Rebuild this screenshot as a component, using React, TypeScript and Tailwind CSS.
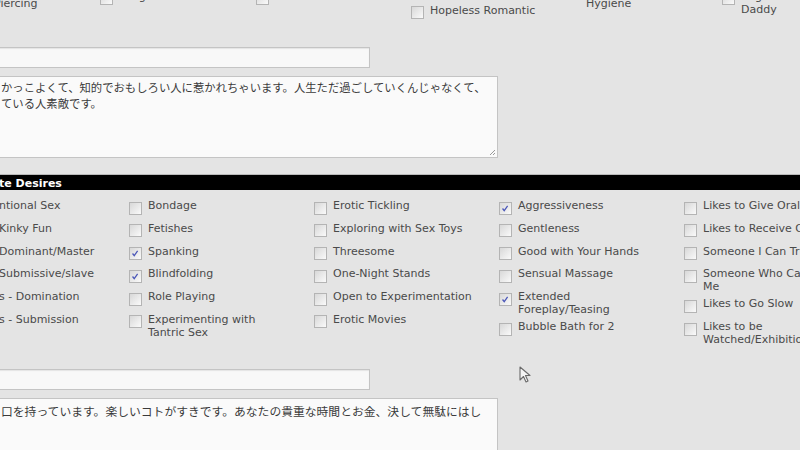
import React from 'react'

type Item = { label: string[]; checked?: boolean }

const col1 = ['ntional Sex', 'Kinky Fun', 'Dominant/Master', 'Submissive/slave', 's - Domination', 's - Submission']

const cols: Item[][] = [
  [
    { label: ['Bondage'] },
    { label: ['Fetishes'] },
    { label: ['Spanking'], checked: true },
    { label: ['Blindfolding'], checked: true },
    { label: ['Role Playing'] },
    { label: ['Experimenting with', 'Tantric Sex'] },
  ],
  [
    { label: ['Erotic Tickling'] },
    { label: ['Exploring with Sex Toys'] },
    { label: ['Threesome'] },
    { label: ['One-Night Stands'] },
    { label: ['Open to Experimentation'] },
    { label: ['Erotic Movies'] },
  ],
  [
    { label: ['Aggressiveness'], checked: true },
    { label: ['Gentleness'] },
    { label: ['Good with Your Hands'] },
    { label: ['Sensual Massage'] },
    { label: ['Extended', 'Foreplay/Teasing'], checked: true },
    { label: ['Bubble Bath for 2'] },
  ],
  [
    { label: ['Likes to Give Oral'] },
    { label: ['Likes to Receive Oral'] },
    { label: ['Someone I Can Trust'] },
    { label: ['Someone Who Can Teach', 'Me'] },
    { label: ['Likes to Go Slow'] },
    { label: ['Likes to be', 'Watched/Exhibitionist'] },
  ],
]

function Box({ checked }: { checked?: boolean }) {
  return (
    <span className="relative block w-[13px] h-[13px] shrink-0 mt-[2.5px] border border-[#b4b4b4] bg-linear-to-br from-[#d8d8d8] to-[#fafafa]">
      {checked && (
        <svg viewBox="0 0 13 13" className="absolute inset-0 w-[11px] h-[11px]">
          <path d="M3 6.5 L5 9 L9 3.5" fill="none" stroke="#4a56b8" strokeWidth="1.5" />
        </svg>
      )}
    </span>
  )
}

function Check({ item }: { item: Item }) {
  return (
    <div className="flex items-start min-h-[22.75px] pt-[3px] pb-[1px] leading-[13px]">
      <Box checked={item.checked} />
      <span className="ml-[6px] whitespace-nowrap">
        {item.label.map((l, i) => (
          <div key={i}>{l}</div>
        ))}
      </span>
    </div>
  )
}

function TextBox({ w }: { w: string }) {
  return <div className={`h-[21px] -ml-[3px] border border-[#c4c4c4] bg-[#f8f8f8] shadow-[inset_0_1px_1px_rgba(0,0,0,0.08)] ${w}`} />
}

export default function App() {
  const jp = { fontFamily: '"Noto Sans CJK JP", "DejaVu Sans", sans-serif' }

  return (
    <div
      className="relative w-[800px] h-[450px] overflow-hidden bg-[#e4e4e4] text-[11px] text-[#4a4a4a]"
      style={{ fontFamily: '"DejaVu Sans", Verdana, sans-serif' }}
    >
      {/* top checkbox row, cut at the top */}
      <div className="flex -mt-[20px] h-[67px] leading-[13px]">
        <div className="w-[100px] shrink-0 pt-[16.5px]">
          <div className="-ml-[6px]">Piercing</div>
        </div>
        <div className="w-[156px] shrink-0 pt-[9.5px] flex items-start">
          <Box />
          <span className="ml-[6px]">Long Hair</span>
        </div>
        <div className="w-[155px] shrink-0 pt-[9.5px] flex items-start">
          <Box />
          <span className="ml-[6px]">Sense of Humor</span>
        </div>
        <div className="w-[156px] shrink-0 pt-[23.5px] flex items-start">
          <Box />
          <span className="ml-[6px]">Hopeless Romantic</span>
        </div>
        <div className="w-[155px] shrink-0 pt-[3.5px] pl-[19px]">
          <div>Good Personal</div>
          <div>Hygiene</div>
        </div>
        <div className="shrink-0 pt-[9.5px] flex items-start">
          <Box />
          <span className="ml-[6px]">
            <div>Sugar</div>
            <div>Daddy</div>
          </span>
        </div>
      </div>

      <TextBox w="w-[373px]" />

      <div
        className="mt-[8px] -ml-[3px] w-[501px] h-[82px] border border-[#c4c4c4] bg-[#fafafa] pt-[2px] pl-[3px] text-[11.35px] leading-[16px] text-[#3a3a3a] relative"
        style={jp}
      >
        <div className="whitespace-nowrap">かっこよくて、知的でおもしろい人に惹かれちゃいます。人生ただ過ごしていくんじゃなくて、</div>
        <div className="whitespace-nowrap">ている人素敵です。</div>
        <svg viewBox="0 0 8 8" className="absolute right-[1px] bottom-[1px] w-[8px] h-[8px]">
          <path d="M7 2 L2 7 M7 5 L5 7" stroke="#9a9a9a" strokeWidth="1" />
        </svg>
      </div>

      {/* section header */}
      <div className="mt-[16px] border-t border-[#b9b9b9] bg-black h-[16px] leading-[17px] text-white font-bold">
        <span className="-ml-[1px] inline-block">te Desires</span>
      </div>

      <div className="flex mt-[6px] h-[173px]">
        <div className="w-[129px] shrink-0">
          {col1.map((t) => (
            <div key={t} className="min-h-[22.75px] pt-[3px] leading-[13px] whitespace-nowrap -ml-[1px]">{t}</div>
          ))}
        </div>
        {cols.map((c, i) => (
          <div key={i} className="w-[185px] shrink-0">
            {c.map((it) => (
              <Check key={it.label.join(' ')} item={it} />
            ))}
          </div>
        ))}
      </div>

      <TextBox w="w-[373px]" />

      <div
        className="mt-[8px] -ml-[3px] w-[501px] h-[80px] border border-[#c4c4c4] bg-[#fafafa] pt-[4px] pl-[3px] text-[11.8px] leading-[16px] text-[#3a3a3a]"
        style={jp}
      >
        <div className="whitespace-nowrap">口を持っています。楽しいコトがすきです。あなたの貴重な時間とお金、決して無駄にはし</div>
      </div>

      {/* mouse pointer */}
      <svg viewBox="0 0 14 18" className="absolute left-[519px] top-[366px] w-[14px] h-[18px]">
        <path d="M1 1 L1 14 L4.5 10.5 L7 16 L9 15 L6.5 9.5 L11 9.5 Z" fill="#f4f4f4" stroke="#6a6a6a" strokeWidth="1.1" strokeLinejoin="round" />
      </svg>
    </div>
  )
}
